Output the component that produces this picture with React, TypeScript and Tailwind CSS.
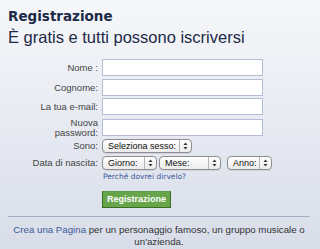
import React from 'react';

const sans = { fontFamily: '"Liberation Sans", Arial, sans-serif' };
const grande = { fontFamily: '"DejaVu Sans", "Liberation Sans", sans-serif' };

function Arrows() {
  return (
    <svg width="5" height="8" viewBox="0 0 5 8" className="shrink-0">
      <path d="M0.5 3 L2.5 0.5 L4.5 3 Z" fill="#333" />
      <path d="M0.5 5 L2.5 7.5 L4.5 5 Z" fill="#333" />
    </svg>
  );
}

function MacSelect({ label, width }: { label: string; width: number }) {
  return (
    <div
      className="flex h-[14px] items-center rounded-[4px] border border-[#8e8e8e] bg-gradient-to-b from-white to-[#ececec] shadow-[0_1px_0_rgba(0,0,0,0.08)]"
      style={{ width }}
    >
      <span className="flex-1 overflow-hidden whitespace-nowrap pl-[5px] text-[9px] leading-none text-[#111]">{label}</span>
      <span className="flex h-full w-[12px] shrink-0 items-center justify-center border-l border-[#b5b5b5]">
        <Arrows />
      </span>
    </div>
  );
}

function Row({ label, children, className = '' }: { label: React.ReactNode; children: React.ReactNode; className?: string }) {
  return (
    <div className={`flex items-center ${className}`}>
      <div className="w-[90px] text-right text-[9.5px] leading-[10px] text-[#444]">{label}</div>
      <div className="ml-[4px]">{children}</div>
    </div>
  );
}

function TextInput() {
  return <div className="h-[17px] w-[161px] border border-[#b4bdd3] bg-white" />;
}

export default function App() {
  return (
    <div
      className="h-[249px] w-[320px] overflow-hidden bg-gradient-to-b from-[#f6f7fa] to-[#d8dde9] pl-[8px] pr-[10px]"
      style={sans}
    >
      <div className="pt-[8px] text-[13.5px] font-bold leading-[16px] text-[#1c2a47]" style={grande}>
        Registrazione
      </div>
      <div className="mt-[3px] text-[16.5px] leading-[20px] text-[#1c2a47]">È gratis e tutti possono iscriversi</div>

      <div className="mt-[12px] flex flex-col">
        <Row label="Nome :" className="h-[17px]"><TextInput /></Row>
        <Row label="Cognome:" className="mt-[3px] h-[17px]"><TextInput /></Row>
        <Row label="La tua e-mail:" className="mt-[2px] h-[17px]"><TextInput /></Row>
        <Row label={<>Nuova<br />password:</>} className="mt-[4px] h-[17px]"><TextInput /></Row>
        <Row label="Sono:" className="mt-[3px] h-[14px]"><MacSelect label="Seleziona sesso:" width={90} /></Row>
        <Row label="Data di nascita:" className="mt-[3px] h-[14px]">
          <div className="flex">
            <MacSelect label="Giorno:" width={55} />
            <div className="ml-[2px]"><MacSelect label="Mese:" width={62} /></div>
            <div className="ml-[6px]"><MacSelect label="Anno:" width={45} /></div>
          </div>
        </Row>
        <div className="ml-[95px] mt-[2px] text-[7.5px] leading-[9px] text-[#3b5998]" style={grande}>
          Perché dovrei dirvelo?
        </div>
        <div className="ml-[94px] mt-[4px]">
          <div className="inline-flex h-[17px] items-center border border-[#3b6e22] border-t-[#5e9a43] bg-[#67a54b] px-[4px] text-[9px] font-bold text-white">
            Registrazione
          </div>
        </div>
      </div>

      <div className="mt-[7px] h-px bg-[#a4adc4]" />
      <div className="mt-[7px] text-center text-[9.7px] leading-[12px] text-[#333]">
        <span className="text-[#3b5998]">Crea una Pagina</span> per un personaggio famoso, un gruppo musicale o un'azienda.
      </div>
    </div>
  );
}
